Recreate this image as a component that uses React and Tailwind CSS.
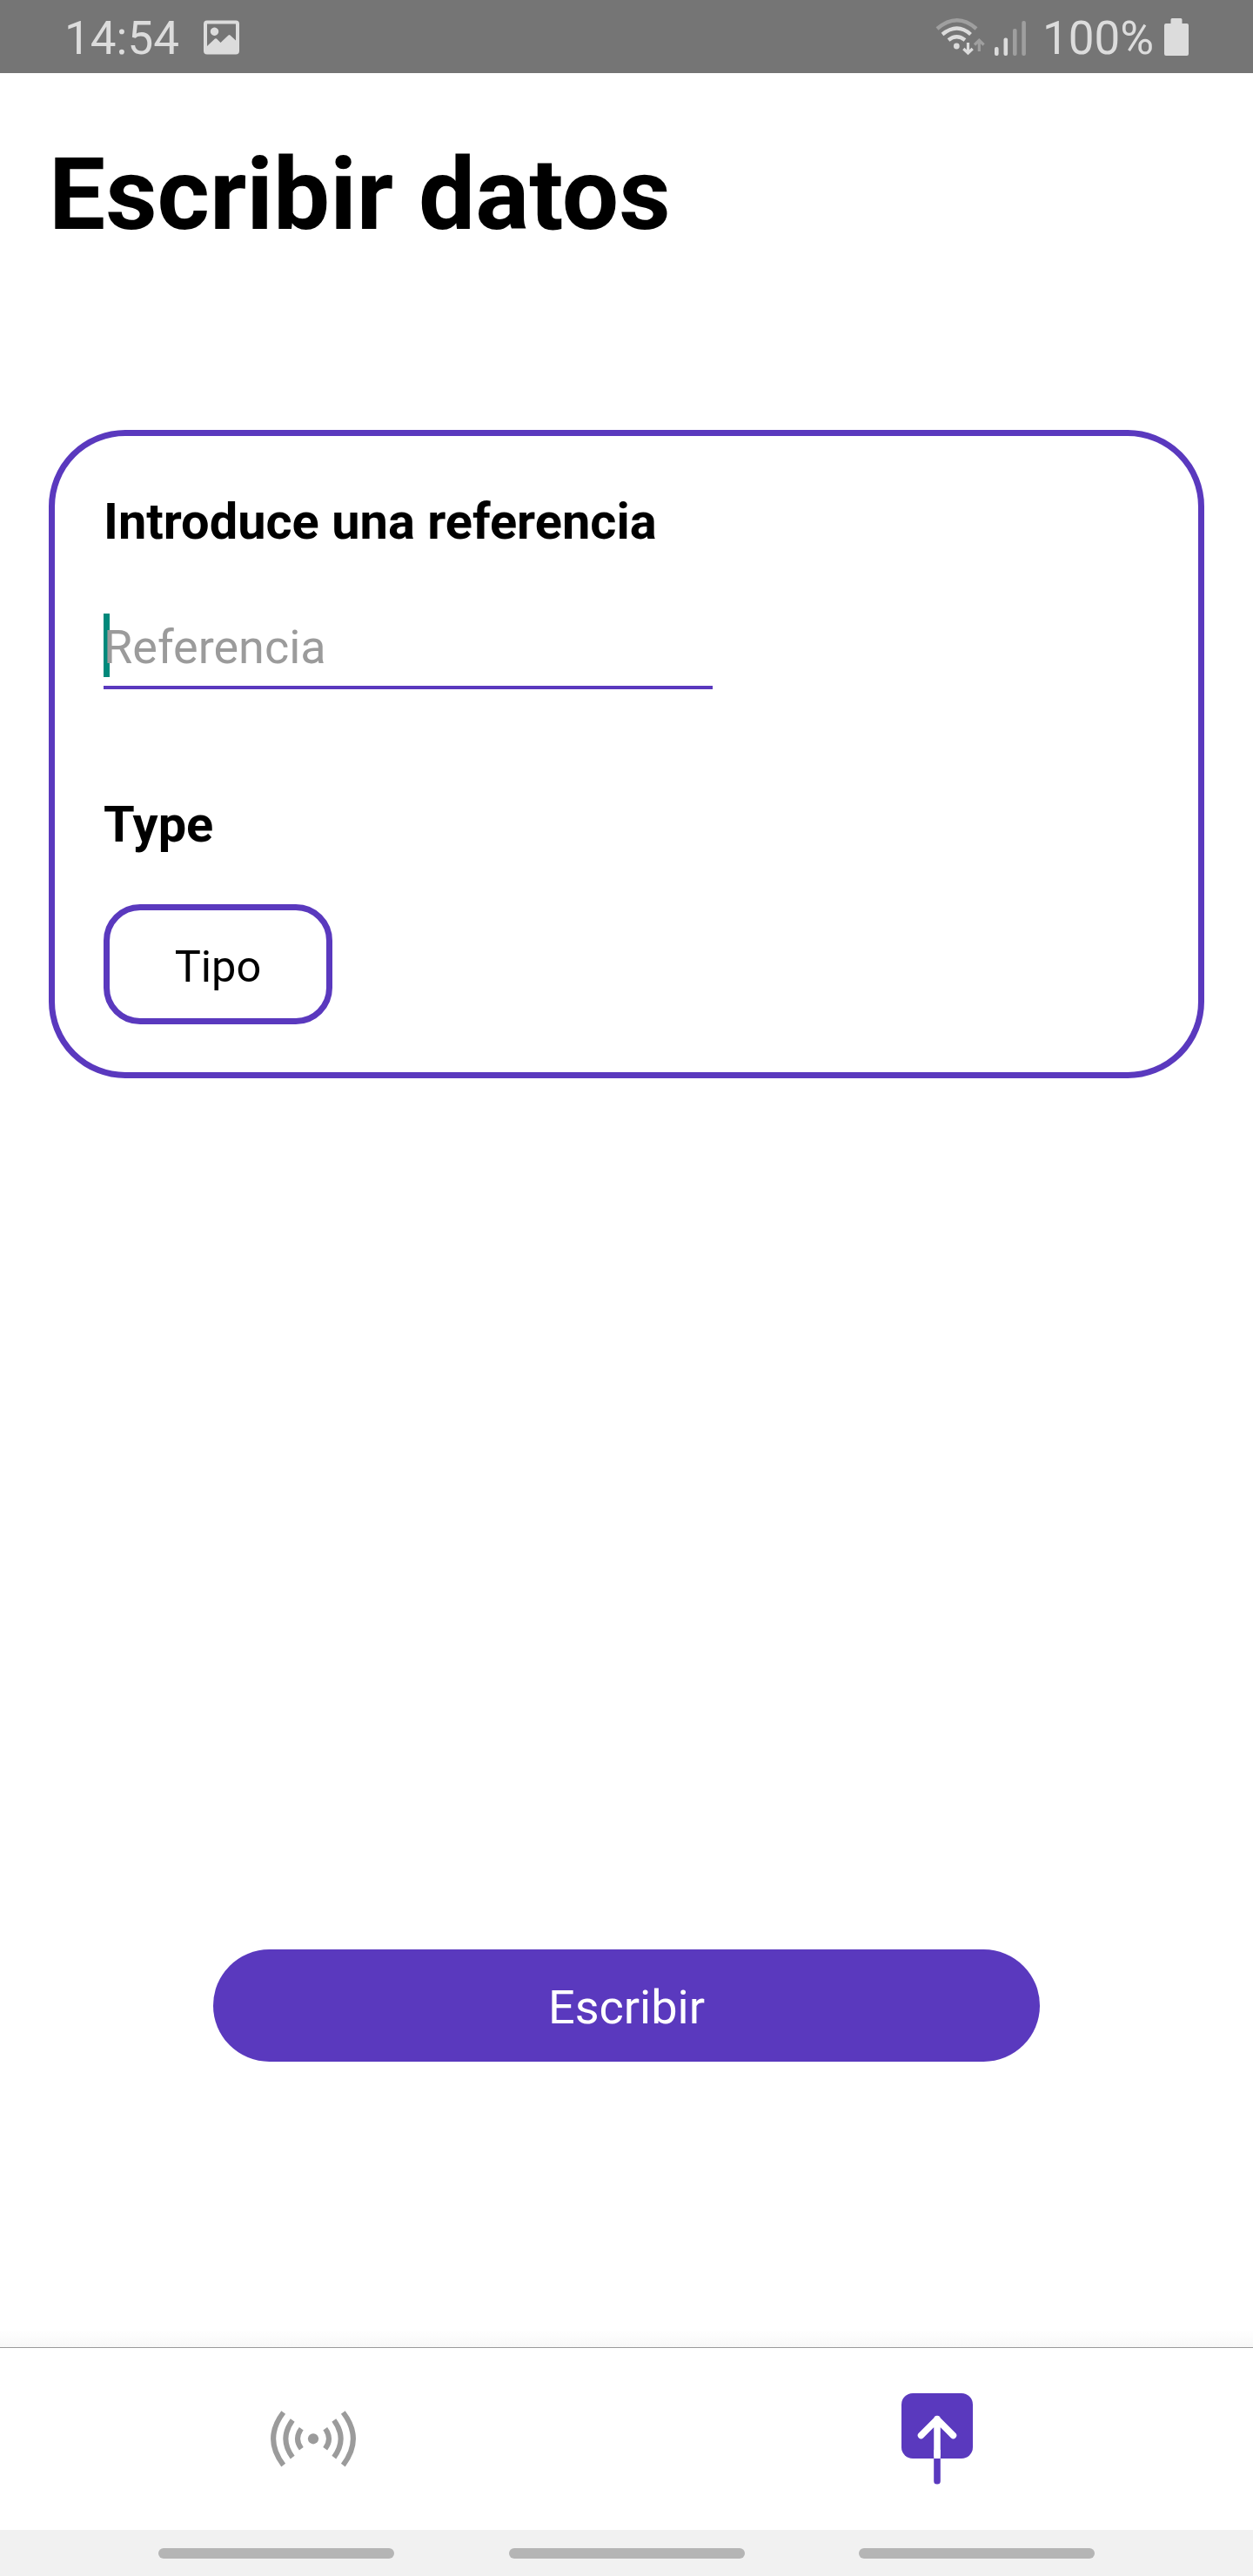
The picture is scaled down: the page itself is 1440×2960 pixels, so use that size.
import React from "react";

function StatusBar() {
  return (
    <header className="flex h-[84px] items-center bg-[#757575] pl-[74px] pr-[74px] text-[53px] leading-none text-[#dcdcdc]">
      <span className="mt-[5px] w-[134px] whitespace-nowrap">14:54</span>
      <svg className="ml-[26px] mt-[2px]" width="41" height="40" viewBox="0 0 41 40">
        <path
          fill="#dcdcdc"
          fillRule="evenodd"
          d="M4 0.5H37Q41 0.5 41 4.5V35.5Q41 39.5 37 39.5H4Q0 39.5 0 35.5V4.5Q0 0.5 4 0.5ZM4 4.5V30L13 21.5Q14 21 15 21.5L19.500 26L28.500 17.500Q29.500 16.500 30.500 17.500L37 23.500V4.500ZM12.500 8.500A4.700 4.700 0 1 0 12.510 8.500Z"
        />
      </svg>
      <div className="flex-1" />
      <svg className="shrink-0" width="106" height="44" viewBox="1075 20 106 44" fill="none">
        <path d="M1077 33Q1100 13.500 1122 33" stroke="#9f9f9f" strokeWidth="4.500" />
        <path d="M1083 39.500Q1100 25.500 1115.500 39.500M1090 46Q1099.500 38.500 1109 46" stroke="#dcdcdc" strokeWidth="4.300" />
        <circle cx="1099.300" cy="53" r="3.400" fill="#dcdcdc" />
        <path d="M1112.500 49V61M1107.300 56L1112.500 61L1117.700 56" stroke="#dcdcdc" strokeWidth="3.200" />
        <path d="M1125.300 59V46M1120 51.500L1125.300 46.300L1130.600 51.500" stroke="#9f9f9f" strokeWidth="3.200" />
        <rect x="1143" y="54" width="4.600" height="10" rx="2" fill="#dcdcdc" />
        <rect x="1153.500" y="43.500" width="4.600" height="20.500" rx="2" fill="#dcdcdc" />
        <rect x="1164" y="33" width="4.600" height="31" rx="2" fill="#9f9f9f" />
        <rect x="1174.300" y="24" width="4.600" height="40" rx="2" fill="#9f9f9f" />
      </svg>
      <span className="ml-[17px] mt-[5px] w-[130px] whitespace-nowrap">100%</span>
      <svg className="ml-[10px]" width="28" height="43" viewBox="0 0 28 43" fill="#dcdcdc">
        <path d="M9 0H19Q20.500 0 20.500 1.500V6H26Q28 6 28 8V41Q28 43 26 43H2Q0 43 0 41V8Q0 6 2 6H7.500V1.500Q7.500 0 9 0Z" />
      </svg>
    </header>
  );
}

function DataCard() {
  return (
    <section className="mx-[56px] mt-[194px] h-[745px] rounded-[88px] border-[7px] border-[#5a39be] pl-[56px] pt-[64px]">
      <h2 className="h-[68px] text-[57.750px] leading-[68px] font-bold">Introduce una referencia</h2>
      <div className="mt-[62px] flex h-[97px] w-[700px] border-b-4 border-[#5a39be] pb-[10px] pt-[10px]">
        <div className="h-[73px] w-[7px] bg-[#00897b]" />
        <span className="relative -ml-[7px] mt-[2px] text-[54px] leading-[73px] text-[#9b9b9b]">Referencia</span>
      </div>
      <h2 className="mt-[121px] h-[68px] text-[57.750px] leading-[68px] font-bold">Type</h2>
      <button className="mt-[58px] block h-[138px] w-[263px] rounded-[42px] border-[7px] border-[#5a39be] pt-[6px] text-[50.500px] leading-none">
        Tipo
      </button>
    </section>
  );
}

function BottomTabs() {
  return (
    <nav className="grid h-[210px] grid-cols-2 border-t border-[#9b9b9b] bg-white">
      <div className="pl-[310px] pt-[70px]">
        <svg width="100" height="68" viewBox="0 0 100 68" fill="none" stroke="#9b9b9b" strokeWidth="6">
          <circle cx="50" cy="34.300" r="6.100" fill="#9b9b9b" stroke="none" />
          <path d="M36.300 22.800Q27.700 34.300 36.300 45.800M26.200 13Q10.500 34.300 26.200 55.600M15.700 4Q-7.500 34.300 15.700 64.600" />
          <path d="M63.700 22.800Q72.300 34.300 63.700 45.800M73.800 13Q89.500 34.300 73.800 55.600M84.300 4Q107.500 34.300 84.300 64.600" />
        </svg>
      </div>
      <div className="pl-[316px] pt-[52px]">
        <svg width="82" height="106" viewBox="0 0 82 106" fill="none" strokeLinecap="round" strokeLinejoin="round">
          <rect width="82" height="75" rx="13" fill="#5a39be" />
          <path d="M41 71V29.500M22.500 48.500L41 30L59.500 48.500" stroke="white" strokeWidth="7.500" />
          <rect x="37.250" y="65" width="7.500" height="10" fill="white" />
          <path d="M37.200 75H44.800V101Q44.800 104.600 41 104.600Q37.200 104.600 37.200 101Z" fill="#5a39be" />
        </svg>
      </div>
    </nav>
  );
}

export default function App() {
  return (
    <div className="flex h-[2960px] w-[1440px] flex-col overflow-hidden bg-white font-[Roboto,sans-serif] text-black">
      <StatusBar />
      <main className="flex-1">
        <h1 className="mt-[66px] mb-[196px] ml-[56px] h-[148px] text-[115.800px] leading-[148px] font-bold">Escribir datos</h1>
        <DataCard />
        <button className="mx-auto mt-[1001px] block h-[129px] w-[950px] rounded-full bg-[#5a39be] pt-[4px] text-[54px] leading-none text-white">
          Escribir
        </button>
      </main>
      <div className="h-[20px] bg-linear-to-b from-white to-[#f8f8f8]" />
      <BottomTabs />
      <footer className="flex h-[53px] justify-between bg-[#f1f1f1] px-[182px] pt-[21px]">
        <div className="h-[12px] w-[271px] rounded-full bg-[#b5b5b5]" />
        <div className="h-[12px] w-[271px] rounded-full bg-[#b5b5b5]" />
        <div className="h-[12px] w-[271px] rounded-full bg-[#b5b5b5]" />
      </footer>
    </div>
  );
}
